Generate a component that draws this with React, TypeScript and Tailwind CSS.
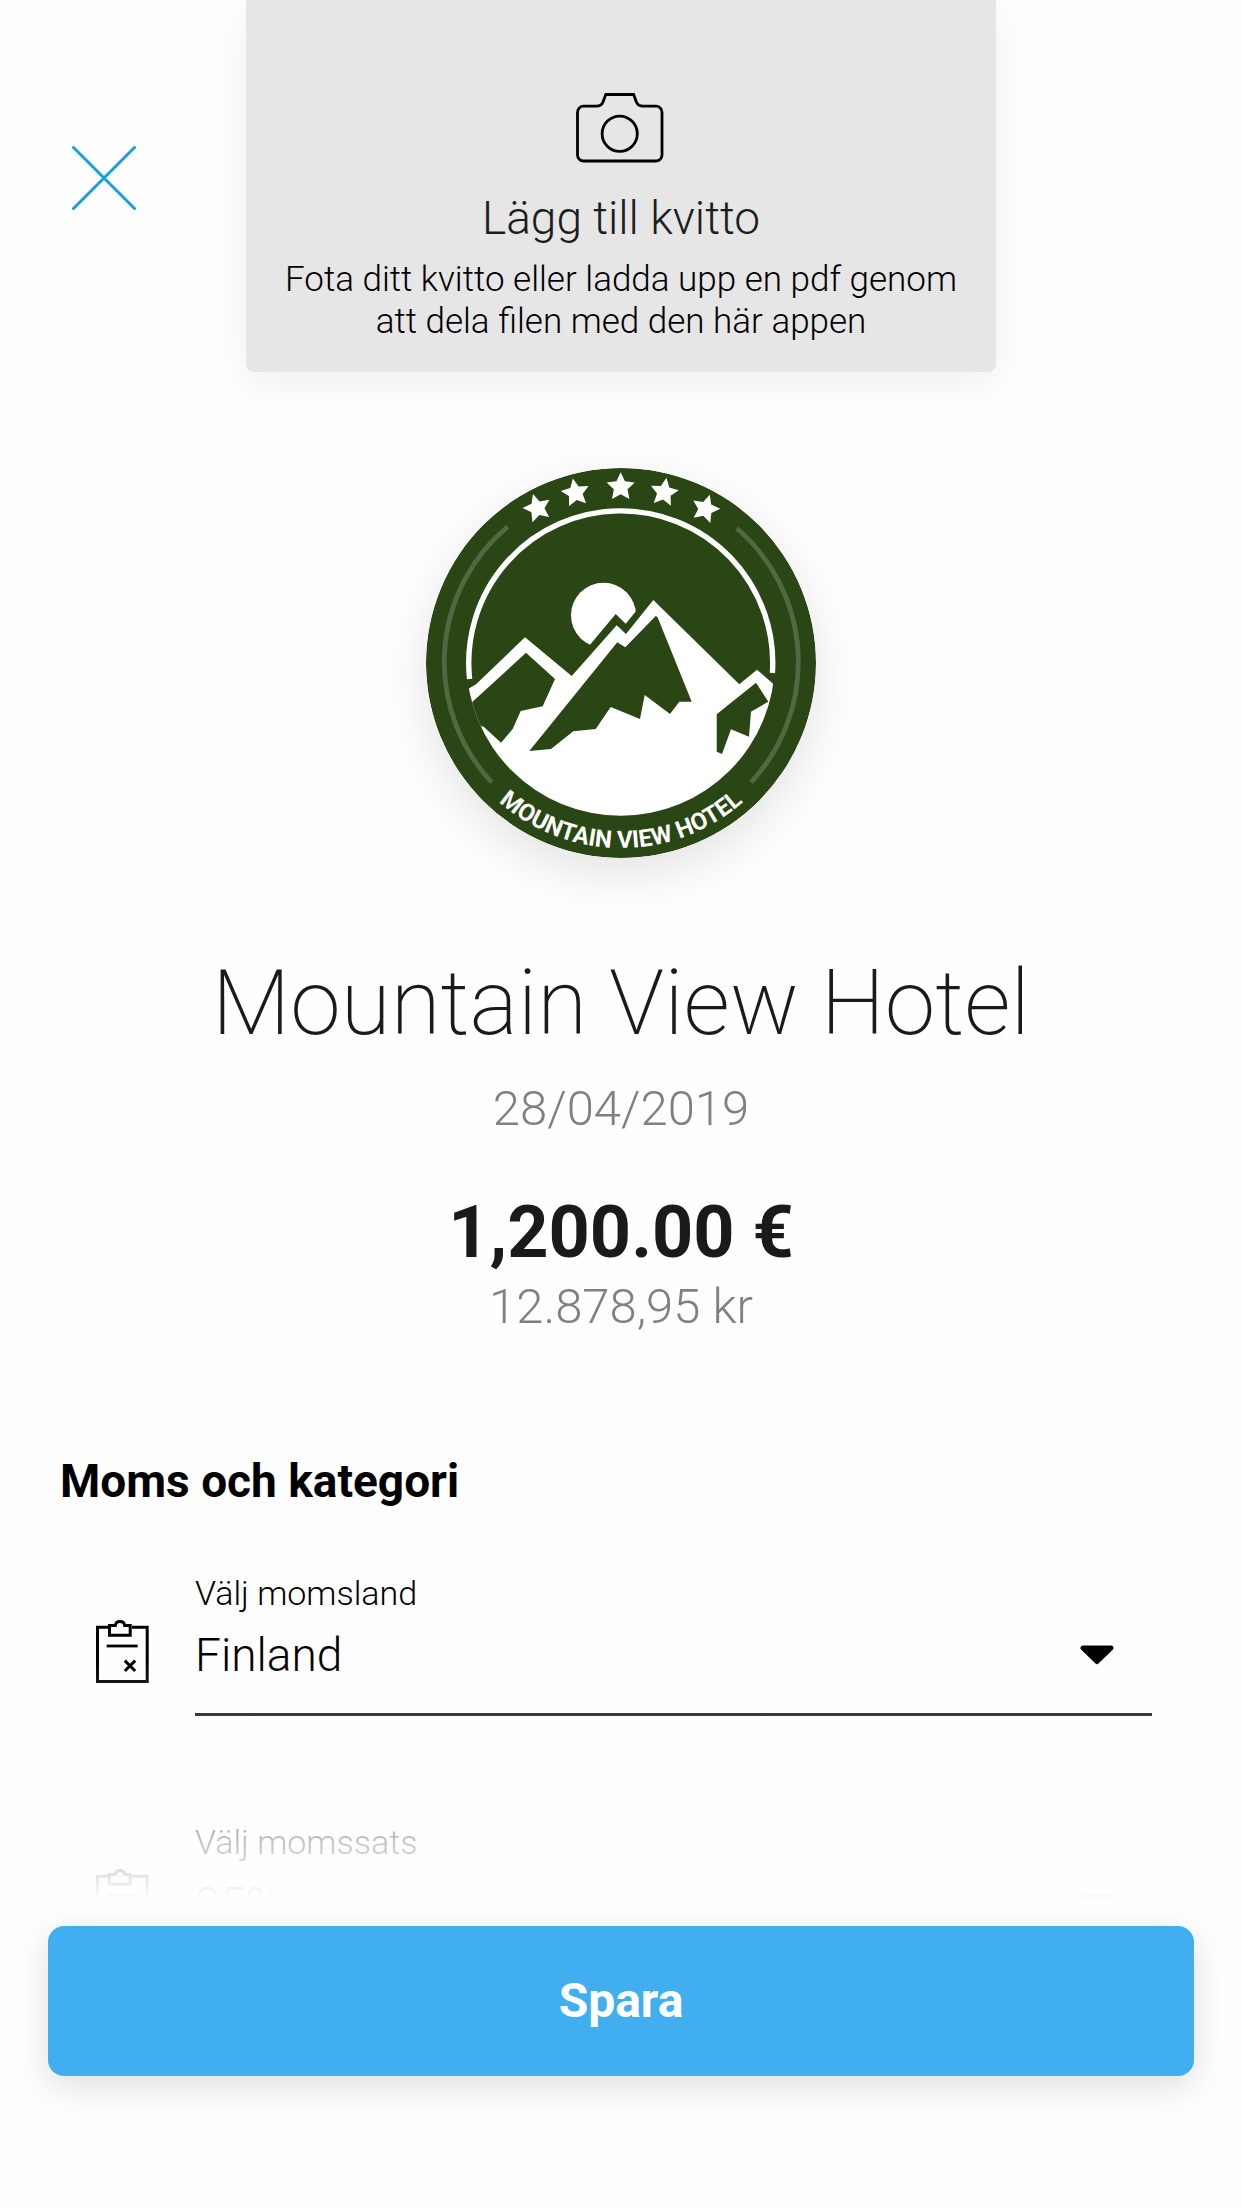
import { useState } from 'react'
import type { ReactNode } from 'react'

const FOREST = '#2b4615'

// angle around the badge and own tilt, both in degrees
const STARS = [
  { angle: -28.5, tilt: -17 },
  { angle: -15, tilt: -10 },
  { angle: 0, tilt: 0 },
  { angle: 14.4, tilt: 9 },
  { angle: 29, tilt: 17 },
]

const starPoints = Array.from({ length: 10 }, (_, i) => {
  const r = i % 2 === 0 ? 14.8 : 7.2
  const a = (Math.PI / 5) * i
  return `${(r * Math.sin(a)).toFixed(2)},${(-r * Math.cos(a)).toFixed(2)}`
}).join(' ')

function HotelLogo() {
  return (
    <svg
      viewBox="0 0 390 390"
      className="size-[390px] rounded-full shadow-[0_16px_50px_rgba(0,0,0,0.11)]"
      role="img"
      aria-labelledby="hotel-name"
    >
      <defs>
        <clipPath id="inner">
          <circle cx="194.7" cy="193.5" r="154.2" />
        </clipPath>
        <path id="name-arc" d="M10 195 A185 185 0 0 0 380 195" />
      </defs>

      <circle cx="195" cy="195" r="195" fill={FOREST} />

      {/* Faint side arcs */}
      <g fill="none" stroke="#fff" strokeOpacity="0.19" strokeWidth="4.8">
        <path d="M81.7 58.7 A176.2 176.2 0 0 0 65.7 314.3" />
        <path d="M310.7 60.3 A176.2 176.2 0 0 1 325 314.3" />
      </g>

      {STARS.map(({ angle, tilt }) => {
        const a = (angle * Math.PI) / 180
        const x = 194.7 + 174.8 * Math.sin(a)
        const y = 193.8 - 174.8 * Math.cos(a)
        return <polygon key={angle} points={starPoints} fill="#fff" transform={`translate(${x} ${y}) rotate(${tilt})`} />
      })}

      {/* Ring */}
      <path d="M43.6 211 A152 152 0 1 1 346.4 205" fill="none" stroke="#fff" strokeWidth="5.4" />

      {/* Sun */}
      <circle cx="177.5" cy="147.2" r="32.5" fill="#fff" />
      <polygon points="150,193.5 189.7,146 199.7,155.7 220,131 230,200 150,200" fill={FOREST} />

      {/* Mountains */}
      <g clipPath="url(#inner)">
        <polygon
          fill="#fff"
          points="30,226 43.3,220.3 50,216.3 99,169.3 145.7,208 190.7,157.3 200,166 227.3,132 313.3,216.3 331,201.7 347.3,216 370,235 370,400 30,400"
        />
        <g fill={FOREST}>
          <polygon points="100,184.7 129,211 116.7,238.3 94.7,243 86.7,261 75,274.7 57.7,258.7 54.7,258 34,254 40,240 46,234.3" />
          <polygon points="229.7,148 231.5,149 265.7,233.7 253.3,233.7 244,246 218.7,227 214,251 184.7,239 169.7,261 147.3,263.3 125,281 103.3,283 191.3,174.3 199.3,179.3" />
          <polygon points="330,214.7 342.3,233.7 325,243.7 323,268.7 305,261.3 296,286 290.7,283.7 290.7,246.3" />
        </g>
      </g>

      <text className="font-['Roboto',sans-serif] text-[24px] font-bold" fill="#fff" textAnchor="middle">
        <textPath href="#name-arc" startOffset="50%">
          MOUNTAIN VIEW HOTEL
        </textPath>
      </text>
    </svg>
  )
}

function CameraIcon() {
  return (
    <svg viewBox="0 0 90 70" className="h-[70px] w-[90px]" fill="none" stroke="#000" strokeWidth="2.8" aria-hidden="true">
      <path d="M7.5 13.2 H20.5 C24 13.2 25.8 12 27 9 L29.8 1.5 H57.6 L60.4 9 C61.6 12 63.4 13.2 67 13.2 H80 A6 6 0 0 1 86 19.2 V62 A6 6 0 0 1 80 68 H7.5 A6 6 0 0 1 1.5 62 V19.2 A6 6 0 0 1 7.5 13.2 Z" />
      <circle cx="43.7" cy="40.7" r="17.6" />
    </svg>
  )
}

function ClipboardIcon() {
  return (
    <svg viewBox="0 0 53 63" className="mt-12 h-[63px] w-[53px]" fill="none" stroke="#000" strokeWidth="3" aria-hidden="true">
      <path d="M13 7.2 H1.5 V61.5 H51.2 V7.2 H36" />
      <path d="M13.5 5.5 H19.3 C20 0.1 28 0.1 28.7 5.5 H34.2 V15.2 H13.5 Z" />
      <path d="M10.7 26 H41.7" strokeWidth="2.8" />
      <path d="M28.8 40.6 L39.2 51 M39.2 40.6 L28.8 51" />
    </svg>
  )
}

function SelectRow({ id, label, options }: { id: string; label: string; options: string[] }) {
  return (
    <div className="flex items-start gap-[46px] pr-[90px] pl-24">
      <ClipboardIcon />
      <div className="flex-1">
        <label htmlFor={id} className="block text-[34px] leading-[42px]">
          {label}
        </label>
        <div className="relative">
          <select
            id={id}
            className="block h-[102px] w-full appearance-none border-b-[3px] border-black bg-transparent pb-4 text-[46px] outline-none"
          >
            {options.map((option) => (
              <option key={option}>{option}</option>
            ))}
          </select>
          <svg viewBox="0 0 34 20" className="pointer-events-none absolute top-[31px] right-[38px] h-5 w-[34px]" aria-hidden="true">
            <path d="M3 3 H31 L17 16.5 Z" stroke="#000" strokeWidth="5" strokeLinejoin="round" />
          </svg>
        </div>
      </div>
    </div>
  )
}

function Header({ children }: { children: ReactNode }) {
  return <header className="grid grid-cols-[246px_1fr_246px]">{children}</header>
}

export default function App() {
  const [saved, setSaved] = useState(false)

  return (
    <div className="flex h-screen flex-col bg-[#fefefe] font-['Roboto',sans-serif] font-light text-black">
      <div className="relative min-h-0 flex-1">
        <main className="h-full overflow-y-auto [scrollbar-width:none]">
          <Header>
            <div className="pt-[146px] pl-[72px]">
              <button type="button" aria-label="Stäng" className="block">
                <svg viewBox="0 0 64 64" className="size-16" stroke="#17a0dc" strokeWidth="3" strokeLinecap="round">
                  <path d="M1.5 1.5 L62.5 62.5 M62.5 1.5 L1.5 62.5" />
                </svg>
              </button>
            </div>
            <button
              type="button"
              className="flex flex-col items-center rounded-b-lg bg-[#e6e6e6] px-6 pt-[93px] pb-[29px] shadow-[0_12px_40px_rgba(0,0,0,0.06)]"
            >
              <CameraIcon />
              <span className="mt-[27px] text-[46px] leading-[56px] text-[#1d1d1b]">Lägg till kvitto</span>
              <span className="mt-[13px] text-[35px] leading-[42px]">
                Fota ditt kvitto eller ladda upp en pdf genom att dela filen med den här appen
              </span>
            </button>
          </Header>

          {/* Purchase summary */}
          <section className="flex flex-col items-center pt-24 text-center">
            <HotelLogo />
            <h1 id="hotel-name" className="mt-[89px] text-[91px] leading-[112px] font-extralight text-[#1a1a1a]">
              Mountain View Hotel
            </h1>
            <p className="mt-[22px] text-[49px] leading-[56px] text-[#808080]">28/04/2019</p>
            <p className="mt-[54px] text-[72px] leading-[84px] font-bold text-[#1a1a1a]">1,200.00 €</p>
            <p className="mt-1 text-[49px] leading-[56px] text-[#808080]">12.878,95 kr</p>
          </section>

          {/* VAT and category */}
          <section className="mt-[118px] pb-24">
            <h2 className="pl-[60px] text-[46px] leading-[56px] font-bold">Moms och kategori</h2>
            <div className="mt-[63px] flex flex-col gap-[105px]">
              <SelectRow id="vat-country" label="Välj momsland" options={['Finland', 'Sverige', 'Norge', 'Danmark']} />
              <SelectRow id="vat-rate" label="Välj momssats" options={['25%', '12%', '6%', '0%']} />
            </div>
          </section>
        </main>
        <div className="pointer-events-none absolute inset-x-0 bottom-0 h-60 bg-linear-to-t from-[#fefefe] to-transparent" />
      </div>

      <footer className="relative px-12 pt-[26px] pb-[132px]">
        <button
          type="button"
          onClick={() => setSaved(true)}
          disabled={saved}
          className="h-[150px] w-full rounded-2xl bg-[#41afef] text-[48px] font-bold text-white shadow-[0_10px_36px_rgba(0,0,0,0.13)]"
        >
          Spara
        </button>
      </footer>
    </div>
  )
}
